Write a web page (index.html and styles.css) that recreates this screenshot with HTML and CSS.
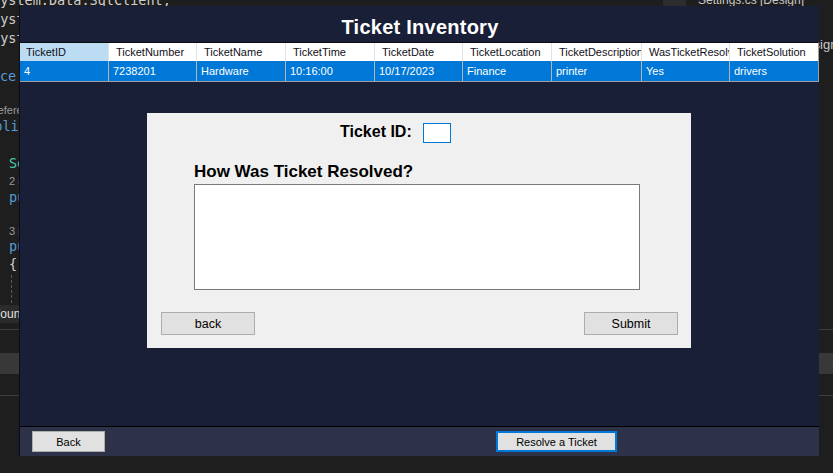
FILE: index.html
```html
<!DOCTYPE html>
<html lang="en">
<head>
<meta charset="utf-8">
<title>Ticket Inventory</title>
<link rel="stylesheet" href="styles.css">
</head>
<body>
<div class="ide">
  <div class="ide-head">
    <div class="ln h19 c-plain ind-s head-code">System.Data.SqlClient;</div>
    <div class="tabstrip">
      <span class="tab-box"></span>
      <span class="tab-title">Settings.cs [Design]</span>
    </div>
  </div>
  <div class="ide-top">
    <div class="code">
      <div class="ln h19 c-plain ind-s">System.Windows.Forms;</div>
      <div class="ln h19 c-plain ind-s">System.Configuration;</div>
      <div class="ln h19"></div>
      <div class="ln h19 c-kw ind-ns">namespace</div>
      <div class="ln h18"></div>
      <div class="lens h13 ind-ref">references</div>
      <div class="ln h19 c-kw ind-pub">public</div>
      <div class="ln h18"></div>
      <div class="ln h19 c-type ind9">Settings</div>
      <div class="lens h16 ind9">2 references</div>
      <div class="ln h17 c-kw ind9">public</div>
      <div class="ln h18"></div>
      <div class="lens h14 ind9">3 references</div>
      <div class="ln h17 c-kw ind9">public</div>
      <div class="ln h19 c-plain ind9">{</div>
      <div class="guide"></div>
      <div class="status-row">Found</div>
    </div>
    <div class="ide-gap"></div>
    <div class="side">
      <div class="side-label">Design</div>
    </div>
  </div>
  <div class="ide-panel">
    <div class="panel-gap"></div>
    <div class="panel-band"></div>
    <div class="panel-gap2"></div>
  </div>
</div>

<div class="form">
  <div class="form-title">Ticket Inventory</div>

  <div class="grid">
    <div class="grid-row grid-head">
      <div class="hcell hcell-first">TicketID</div>
      <div class="hcell">TicketNumber</div>
      <div class="hcell">TicketName</div>
      <div class="hcell">TicketTime</div>
      <div class="hcell">TicketDate</div>
      <div class="hcell">TicketLocation</div>
      <div class="hcell">TicketDescription</div>
      <div class="hcell">WasTicketResolved</div>
      <div class="hcell">TicketSolution</div>
    </div>
    <div class="grid-row grid-sel">
      <div class="dcell">4</div>
      <div class="dcell">7238201</div>
      <div class="dcell">Hardware</div>
      <div class="dcell">10:16:00</div>
      <div class="dcell">10/17/2023</div>
      <div class="dcell">Finance</div>
      <div class="dcell">printer</div>
      <div class="dcell">Yes</div>
      <div class="dcell">drivers</div>
    </div>
  </div>

  <div class="dialog">
    <div class="id-row">
      <span class="id-label">Ticket ID:</span>
      <span class="id-input"></span>
    </div>
    <div class="resolve-heading">How Was Ticket Resolved?</div>
    <div class="resolve-text"></div>
    <div class="dialog-actions">
      <button class="btn btn-dialog">back</button>
      <button class="btn btn-dialog">Submit</button>
    </div>
  </div>

  <div class="form-spacer"></div>

  <div class="form-bar">
    <button class="btn btn-bar">Back</button>
    <button class="btn btn-bar btn-focus">Resolve a Ticket</button>
  </div>
</div>
</body>
</html>
```

FILE: styles.css
```css
* { box-sizing: border-box; }

html, body {
  margin: 0;
  padding: 0;
}

body {
  width: 833px;
  height: 473px;
  overflow: hidden;
  background: #1e1e1e;
  position: relative;
  font-family: "Liberation Sans", Arial, sans-serif;
}

/* ---------- IDE background ---------- */
.ide {
  width: 833px;
  height: 473px;
  display: flex;
  flex-direction: column;
  overflow: hidden;
}

.ide-head {
  height: 19px;
  margin-top: -9px;
  display: flex;
  overflow: hidden;
  flex-shrink: 0;
}
.head-code {
  width: 663px;
  overflow: hidden;
}

.tabstrip {
  flex: 1;
  display: flex;
  overflow: hidden;
}
.tab-box {
  width: 23px;
  height: 15px;
  background: #2d2d2d;
}
.tab-title {
  margin-left: 12px;
  font-size: 12px;
  line-height: 19px;
  padding-top: 0;
  color: #c8c8c8;
  white-space: nowrap;
}

.ide-top {
  height: 319px;
  display: flex;
  overflow: hidden;
  flex-shrink: 0;
}

.ln {
  font-family: "DejaVu Sans Mono", monospace;
  font-size: 13.5px;
  white-space: pre;
}

.code {
  width: 19px;
  overflow: hidden;
  white-space: nowrap;
}

.lens {
  font-family: "Liberation Sans", Arial, sans-serif;
  font-size: 11px;
  color: #9a9a9a;
  white-space: nowrap;
}

.h13 { height: 13px; line-height: 13px; }
.h14 { height: 14px; line-height: 14px; }
.h16 { height: 16px; line-height: 16px; }
.h17 { height: 17px; line-height: 17px; }
.h18 { height: 18px; line-height: 18px; }
.h19 { height: 19px; line-height: 19px; }

.c-plain { color: #cfcfcf; }
.c-kw { color: #569cd6; }
.c-type { color: #4ec9b0; }

.ind-s { text-indent: -8px; }
.ind-ns { text-indent: -57px; }
.ind-ref { text-indent: -6px; }
.ind-pub { text-indent: -22px; }
.ind9 { padding-left: 9px; }

.guide {
  height: 31px;
  margin-left: 11px;
  padding-top: 1px;
}
.guide::before {
  content: "";
  display: block;
  height: 28px;
  border-left: 1px dashed #5a5a5a;
}

.status-row {
  height: 18px;
  line-height: 18px;
  background: #2b2b2b;
  color: #e0e0e0;
  font-size: 12px;
  text-indent: -7px;
  white-space: nowrap;
}

.ide-gap { flex: 1; }

.side {
  width: 14px;
  overflow: hidden;
}

.side-label {
  margin-top: 28px;
  font-size: 13px;
  line-height: 14px;
  color: #c8c8c8;
  white-space: nowrap;
  text-indent: -22px;
}

.ide-panel {
  flex: 1;
  border-top: 1px solid #3c3c3c;
}
.panel-gap { height: 23px; }
.panel-band {
  height: 21px;
  background: #383838;
}
.panel-gap2 {
  height: 22px;
  border-bottom: 1px solid #3c3c3c;
}

/* ---------- WinForms window ---------- */
.form {
  position: absolute;
  left: 19px;
  top: 6px;
  width: 800px;
  height: 450px;
  background: #1a1f38;
  border-left: 1px solid #0b0d18;
  display: flex;
  flex-direction: column;
}

.form-title {
  height: 36px;
  padding-top: 6px;
  line-height: 30px;
  text-align: center;
  color: #ffffff;
  font-weight: bold;
  font-size: 20px;
  letter-spacing: 0.25px;
  padding-left: 1px;
}

/* grid */
.grid {
  width: 799px;
  border-top: 1px solid #0a0a0a;
  border-right: 1px solid #a0a0a0;
  border-bottom: 1px solid #a0a0a0;
  background: #ffffff;
}

.grid-row {
  display: grid;
  grid-template-columns: 89px 88px 89px 89px 88px 89px 90px 88px 88px;
}

.grid-head { height: 18px; }
.grid-sel { height: 20px; background: #0078d7; }

.hcell {
  padding-left: 7px;
  font-size: 11px;
  line-height: 18px;
  color: #101020;
  white-space: nowrap;
  overflow: hidden;
  border-right: 1px solid #e2e2e2;
}
.hcell:last-child { border-right: none; }
.hcell-first {
  background: #bcdcf4;
  padding-left: 6px;
}

.dcell {
  padding-left: 4px;
  font-size: 11px;
  line-height: 20px;
  color: #ffffff;
  white-space: nowrap;
  overflow: hidden;
  border-right: 1px solid #b4b4b4;
}
.dcell:last-child { border-right: none; }

/* dialog panel */
.dialog {
  margin-top: 31px;
  margin-left: 127px;
  width: 544px;
  height: 235px;
  background: #f0f0f0;
  display: flex;
  flex-direction: column;
}

.id-row {
  margin-top: 10px;
  height: 20px;
  padding-left: 193px;
  display: flex;
  align-items: center;
}
.id-label {
  font-weight: bold;
  font-size: 16px;
  line-height: 17px;
  padding-bottom: 3px;
  color: #000;
}
.id-input {
  margin-left: 11px;
  width: 28px;
  height: 20px;
  background: #fff;
  border: 1px solid #0078d7;
}

.resolve-heading {
  margin-top: 19px;
  margin-left: 47px;
  height: 20px;
  line-height: 20px;
  font-weight: bold;
  font-size: 17px;
  color: #000;
}

.resolve-text {
  margin-top: 2px;
  margin-left: 47px;
  width: 446px;
  height: 106px;
  background: #ffffff;
  border: 1px solid #7a7a7a;
}

.dialog-actions {
  margin-top: 22px;
  padding: 0 13px 0 14px;
  display: flex;
  justify-content: space-between;
}

.btn {
  font-family: "Liberation Sans", Arial, sans-serif;
  background: #e1e1e1;
  border: 1px solid #adadad;
  color: #000;
  padding: 0;
  margin: 0;
  text-align: center;
}
.btn-dialog {
  width: 94px;
  height: 23px;
  font-size: 12.5px;
}

.form-spacer { flex: 1; }

.form-bar {
  height: 30px;
  border-top: 1px solid #000;
  background: #2e3248;
  display: flex;
  align-items: flex-start;
  padding-top: 4px;
  padding-left: 12px;
}
.btn-bar {
  width: 73px;
  height: 21px;
  font-size: 11px;
}
.btn-focus {
  margin-left: 391px;
  width: 121px;
  border: 2px solid #0078d7;
}
```
